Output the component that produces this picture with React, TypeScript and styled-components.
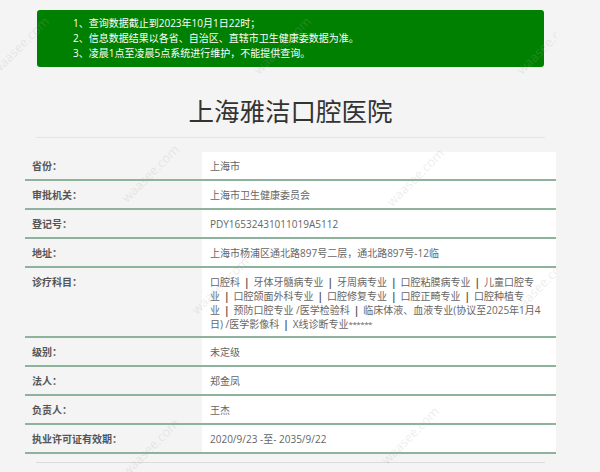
import React from "react";
import styled, { createGlobalStyle } from "styled-components";

const GlobalStyle = createGlobalStyle`
  html, body {
    margin: 0;
    padding: 0;
    background: #f4f4f4;
  }
  body {
    font-family: "Open Sans", "Noto Sans CJK SC", sans-serif;
    font-size: 10px;
    color: #666;
  }
`;

const Page = styled.div`
  position: relative;
  width: 531px;
  padding-left: 25px;
  overflow: hidden;
`;

const Notice = styled.div`
  margin: 10px 12px 0;
  padding: 6px 0 6px 36px;
  background: #008000;
  border-radius: 3px;
  color: #fff;
  font-size: 10px;
  line-height: 15px;
`;

const NoticeLine = styled.div`
  white-space: nowrap;
`;

const Title = styled.h1`
  margin: 29px 11px 0;
  padding-bottom: 11px;
  border-bottom: 1px solid #e4e4e4;
  font-size: 25.5px;
  font-weight: normal;
  line-height: 30px;
  text-align: center;
  color: #333;
`;

const Table = styled.div`
  margin-top: 14px;
  display: grid;
  grid-template-columns: 177px 1fr;
`;

const Label = styled.div`
  padding: 7px 0 5px 7px;
  line-height: 15px;
  font-weight: bold;
  color: #555;
  border-bottom: 2px solid #8db39d;
`;

const Value = styled.div`
  padding: 7px 8px 5px 8px;
  line-height: 14px;
  background: #fff;
  color: #666;
  border-bottom: 2px solid #8db39d;
`;

const ValueLine = styled.span`
  display: block;
  white-space: nowrap;
`;

const Sep = styled.span`
  padding: 0 4px;
  font-weight: bold;
  color: #555;
`;

const Stars = styled.span`
  font-size: 8px;
  vertical-align: top;
  letter-spacing: -0.5px;
`;

const BottomRule = styled.div`
  margin: 8px 11px 0;
  border-top: 1px solid #dcdcdc;
  height: 9px;
`;

const Watermark = styled.span<{ $x: number; $y: number }>`
  position: absolute;
  left: ${(p) => p.$x}px;
  top: ${(p) => p.$y}px;
  transform: rotate(-45deg);
  transform-origin: left bottom;
  font-family: "Open Sans", sans-serif;
  font-size: 13px;
  color: rgba(170, 170, 170, 0.22);
  white-space: nowrap;
  pointer-events: none;
`;

const S = () => <Sep>|</Sep>;

const rows: { label: string; value: React.ReactNode }[] = [
  { label: "省份：", value: "上海市" },
  { label: "审批机关：", value: "上海市卫生健康委员会" },
  { label: "登记号：", value: "PDY16532431011019A5112" },
  { label: "地址：", value: "上海市杨浦区通北路897号二层，通北路897号-12临" },
  {
    label: "诊疗科目：",
    value: (
      <>
        <ValueLine>
          口腔科<S />牙体牙髓病专业<S />牙周病专业<S />口腔粘膜病专业<S />儿童口腔专
        </ValueLine>
        <ValueLine>
          业<S />口腔颌面外科专业<S />口腔修复专业<S />口腔正畸专业<S />口腔种植专
        </ValueLine>
        <ValueLine>
          业<S />预防口腔专业 /医学检验科<S />临床体液、血液专业(协议至2025年1月4
        </ValueLine>
        <ValueLine>
          日) /医学影像科<S />X线诊断专业<Stars>******</Stars>
        </ValueLine>
      </>
    ),
  },
  { label: "级别：", value: "未定级" },
  { label: "法人：", value: "郑金凤" },
  { label: "负责人：", value: "王杰" },
  { label: "执业许可证有效期：", value: "2020/9/23 -至- 2035/9/22" },
];

const marks = [
  { x: 0, y: 60 },
  { x: 262, y: 60 },
  { x: 525, y: 60 },
  { x: 130, y: 188 },
  { x: 395, y: 192 },
  { x: 200, y: 300 },
  { x: 520, y: 300 },
  { x: 130, y: 462 },
  { x: 390, y: 450 },
];

export default function App() {
  return (
    <>
      <GlobalStyle />
      <Page>
        <Notice>
          <NoticeLine>1、查询数据截止到2023年10月1日22时；</NoticeLine>
          <NoticeLine>2、信息数据结果以各省、自治区、直辖市卫生健康委数据为准。</NoticeLine>
          <NoticeLine>3、凌晨1点至凌晨5点系统进行维护，不能提供查询。</NoticeLine>
        </Notice>
        <Title>上海雅洁口腔医院</Title>
        <Table>
          {rows.map((r) => (
            <React.Fragment key={r.label}>
              <Label>{r.label}</Label>
              <Value>{r.value}</Value>
            </React.Fragment>
          ))}
        </Table>
        <BottomRule />
        {marks.map((m, i) => (
          <Watermark key={i} $x={m.x} $y={m.y}>
            waasee.com
          </Watermark>
        ))}
      </Page>
    </>
  );
}
